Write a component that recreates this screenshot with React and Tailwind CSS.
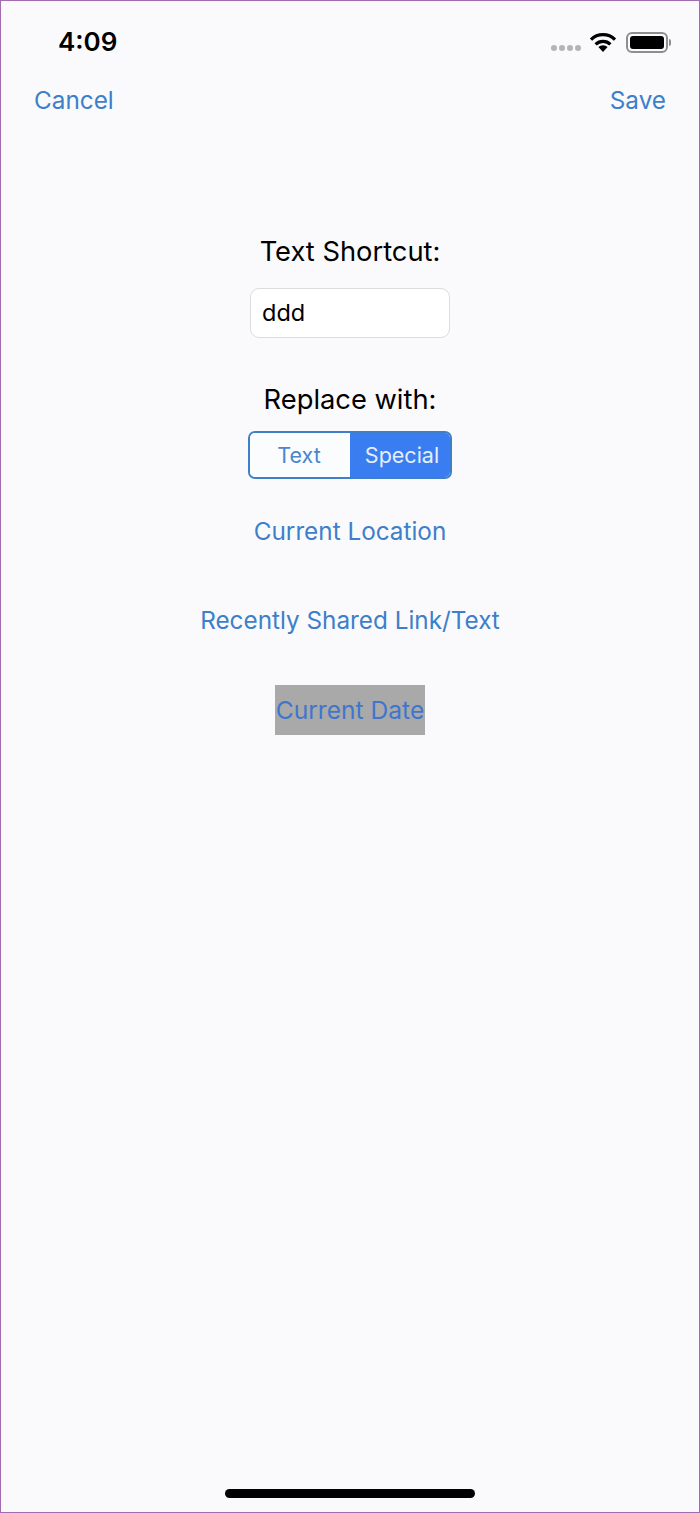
const StatusIcons = () => (
  <div className="flex items-center">
    <div className="flex gap-[2px] mt-[12px] mr-[8px]">
      <span className="w-[6px] h-[6px] rounded-full bg-[#b4b4b6]" />
      <span className="w-[6px] h-[6px] rounded-full bg-[#b4b4b6]" />
      <span className="w-[6px] h-[6px] rounded-full bg-[#b4b4b6]" />
      <span className="w-[6px] h-[6px] rounded-full bg-[#b4b4b6]" />
    </div>
    <svg width="28" height="20" viewBox="0 0 28 20" className="mr-[9px]">
      <path d="M14 20l-4.6-5a6.6 6.6 0 0 1 9.2 0z" fill="#000" />
      <path d="M6.6 12.4a10.6 10.6 0 0 1 14.8 0" fill="none" stroke="#000" strokeWidth="3.2" />
      <path d="M2 7.6a17 17 0 0 1 24 0" fill="none" stroke="#000" strokeWidth="3.2" />
    </svg>
    <div className="w-[42px] h-[21px] rounded-[6px] border-2 border-[#8e8e90] p-[2px]">
      <div className="w-full h-full rounded-[3px] bg-black" />
    </div>
    <div className="w-[2px] h-[7px] ml-[1px] rounded-r-sm bg-[#8e8e90]" />
  </div>
)

const LinkRow = ({ children, className }) => (
  <div className={"leading-[50px] " + (className || "")}>{children}</div>
)

export default function App() {
  return (
    <div className="w-[700px] h-[1513px] flex flex-col items-stretch border border-[#a36bb0] bg-[#fafafc] font-['Inter','Liberation_Sans',sans-serif]">
      {/* status bar */}
      <div className="flex justify-between items-center h-[40px] mt-[21px] pl-[57px] pr-[28px]">
        <span className="text-[26px] font-semibold text-black leading-none">4:09</span>
        <StatusIcons />
      </div>

      {/* nav */}
      <div className="flex justify-between items-center h-[40px] mt-[18px] px-[33px] text-[24.3px] text-[#3d7fca]">
        <span>Cancel</span>
        <span>Save</span>
      </div>

      {/* form */}
      <div className="flex flex-col items-center mt-[112px]">
        <div className="text-[27.3px] leading-[40px] text-black">Text Shortcut:</div>
        <div className="w-[200px] h-[50px] mt-[16px] flex items-center px-[11px] rounded-[9px] border border-[#dcdcde] bg-white text-[23.5px] text-black">
          ddd
        </div>
        <div className="text-[27.3px] leading-[40px] text-black mt-[42px]">Replace with:</div>
        <div className="flex w-[204px] h-[48px] mt-[11px] rounded-[7px] border-2 border-[#3f7fc9] overflow-hidden text-[21.5px]">
          <div className="w-[100px] flex items-center justify-center pr-[2px] bg-[#fbfcfe] text-[#4a86cc]">Text</div>
          <div className="flex-1 flex items-center justify-center pl-[4px] bg-[#3a7df0] text-[#e4eefc]">Special</div>
        </div>
        <LinkRow className="mt-[27px] text-[24.3px] text-[#3d7fca]">Current Location</LinkRow>
        <LinkRow className="mt-[39px] text-[24.3px] text-[#3d7fca]">Recently Shared Link/Text</LinkRow>
        <LinkRow className="mt-[40px] px-[1px] bg-[#a9a9a9] text-[24.6px] text-[#3f76cc]">Current Date</LinkRow>
      </div>

      {/* home indicator */}
      <div className="mt-auto mb-[14px] self-center w-[250px] h-[9px] rounded-full bg-black" />
    </div>
  )
}
